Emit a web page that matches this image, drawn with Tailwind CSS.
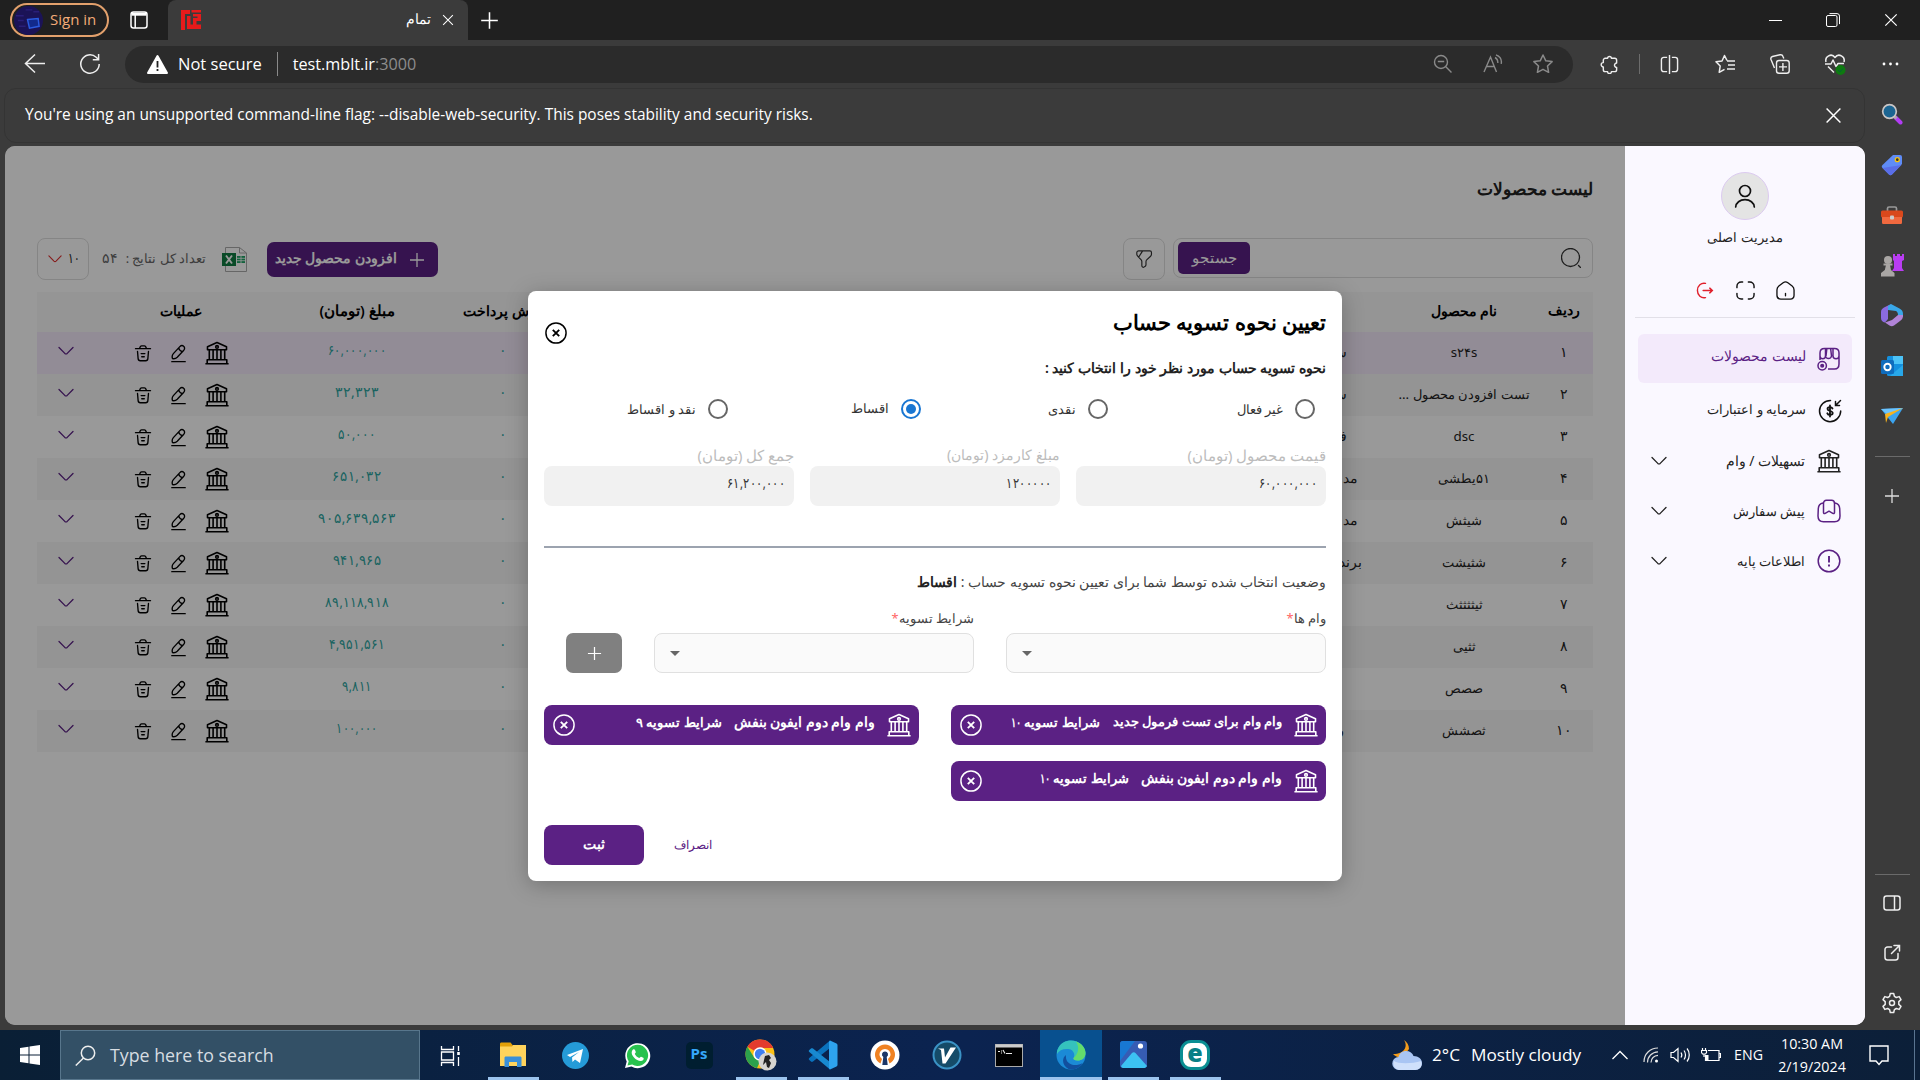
<!DOCTYPE html>
<html lang="fa">
<head>
<meta charset="utf-8">
<title>تمام</title>
<script src="https://cdn.jsdelivr.net/npm/@tailwindcss/browser@4"></script>
</head>
<body class="w-[1920px] h-[1080px] overflow-hidden bg-[#3b3b3b] text-white font-['Open_Sans',sans-serif]">
<svg class="hidden">
  <symbol id="bank" viewBox="0 0 24 24" fill="none" stroke="currentColor" stroke-width="1.600" stroke-linejoin="round">
    <path d="M2.500 8.800V5.800L12 1.500l9.500 4.300v3zM4.300 9v9.500M8.100 9v9.500M12 9v9.500M15.900 9v9.500M19.700 9v9.500M2.200 22.500v-3.700h19.600v3.700M.4 22.700h23.200"/><circle cx="12" cy="5.900" r="1.300"/>
  </symbol>
  <symbol id="pencil" viewBox="0 0 24 24" fill="none" stroke="currentColor" stroke-width="1.700" stroke-linejoin="round" stroke-linecap="round">
    <path d="M4.500 18.500c-1-2.500-.5-4.600 1-6.300L13.700 3.300c1.500-1.500 3.400-1.700 4.800-.4 1.500 1.300 1.600 3.300.2 4.900L10.400 16.800c-1.500 1.500-3.500 2.200-5.900 1.700zM12.200 5c.6 2.500 2.200 4.200 4.800 4.600M3.500 22.300h17"/>
  </symbol>
  <symbol id="trash" viewBox="0 0 24 24" fill="none" stroke="currentColor" stroke-width="1.800" stroke-linecap="round" stroke-linejoin="round">
    <path d="M2 6.200h20M7.500 6c.6-2.600 1-3.600 2.600-3.600h3.800c1.600 0 2 1 2.600 3.600M4.700 10l.8 9.500c.2 2 .8 2.800 2.800 2.800h7.400c2 0 2.600-.8 2.800-2.800l.8-9.500M9.500 12.800h5M10.300 17h3.400"/>
  </symbol>
  <symbol id="down" viewBox="0 0 16 16" fill="none" stroke="currentColor" stroke-width="1.300" stroke-linecap="round" stroke-linejoin="round"><path d="M1 4.500l5.800 5.900c.8.700 1.600.7 2.400 0L15 4.500"/></symbol>
  <symbol id="plus" viewBox="0 0 16 16" fill="none" stroke="currentColor" stroke-width="1.300"><path d="M8 1v14M1 8h14"/></symbol>
  <symbol id="x" viewBox="0 0 16 16" fill="none" stroke="currentColor" stroke-width="1.400"><path d="M1.500 1.500l13 13M14.500 1.500l-13 13"/></symbol>
  <symbol id="cx" viewBox="0 0 24 24" fill="none" stroke="currentColor" stroke-width="1.600"><circle cx="12" cy="12" r="11"/><path stroke-width="2" d="M8.500 8.500l7 7M15.500 8.500l-7 7"/></symbol>
</svg>

<!-- Tab strip -->
<header class="flex h-10 items-center bg-[#202020]">
  <div class="ml-[10px] flex h-[34px] w-[99px] items-center gap-[7px] rounded-full border-2 border-[#e2a06c] pl-[2px] text-[15px] text-[#f3ab78]">
    <svg class="size-[29px] shrink-0" viewBox="0 0 30 30"><circle cx="15" cy="15" r="15" fill="#1b1357"/><path d="M2 10h8M4 15h6M5 21h7M12 4h7M20 6h6" stroke="#2a1f78" stroke-width="1.500"/><path d="M14 14l11-1 1 8-10 2z" fill="#122a8c" stroke="#2b5be0" stroke-width="1.500"/></svg>
    <span class="whitespace-nowrap pb-0.5">Sign in</span>
  </div>
  <svg class="ml-[21px] size-[18px]" viewBox="0 0 18 18" fill="none" stroke="#fff" stroke-width="1.500"><rect x="1" y="1" width="16" height="16" rx="2.500"/><path stroke-width="3" d="M1.500 3.200h15"/><path d="M5.200 4v13"/></svg>
  <div class="ml-[20px] flex h-full w-[300px] items-center rounded-t-lg bg-[#3b3b3b] pl-[13px] pr-[14px]">
    <svg class="size-5" viewBox="0 0 20 20" fill="#e61b1b"><path d="M0 0h9v4H4v16H0zM10.500 0H20v2.500h-9.500zM6 6h3.500v8.500H12V8h4.500V6.500H12V4h8v7h-4.500v3.500H20V19H6z"/></svg>
    <span class="ml-auto pb-0.5 text-sm font-['Noto_Sans',sans-serif]">تمام</span>
    <svg class="ml-[11px] size-[12px]"><use href="#x"/></svg>
  </div>
  <svg class="ml-[12px] size-[19px]"><use href="#plus"/></svg>
  <div class="ml-auto mr-[22px] flex items-center gap-[44px]">
    <svg class="size-[14px]" viewBox="0 0 14 14" stroke="#fff"><path d="M1 7.500h13"/></svg>
    <svg class="size-[14px]" viewBox="0 0 14 14" fill="none" stroke="#fff"><rect x=".5" y="2.500" width="10.500" height="11" rx="1.500"/><path d="M3.500.6h7.500a2.500 2.500 0 0 1 2.500 2.500v8"/></svg>
    <svg class="size-[14px]"><use href="#x"/></svg>
  </div>
</header>

<!-- Toolbar -->
<nav class="flex h-12 items-center">
  <svg class="ml-[24px] size-[22px]" viewBox="0 0 22 22" fill="none" stroke="#eee" stroke-width="1.500"><path d="M21 10.500H1.500M11 1.500L1.500 10.500l9.500 9"/></svg>
  <svg class="ml-[33px] size-[22px]" viewBox="0 0 22 22" fill="none" stroke="#eee" stroke-width="1.500"><path d="M20.200 11a9.200 9.200 0 1 1-3-6.800l2.300 2.300M19.600 1v5.800h-5.800"/></svg>
  <div class="ml-[24px] flex h-[37px] w-[1448px] items-center rounded-full bg-[#2b2b2b] pl-[22px] pr-[20px]">
    <svg class="size-[21px]" viewBox="0 0 21 21"><path fill="#fff" stroke="#fff" stroke-width="2" stroke-linejoin="round" d="M10.500 2L20 19H1z"/><path stroke="#222" stroke-width="1.800" d="M10.500 7v6.500M10.500 15v2"/></svg>
    <span class="ml-[10px] whitespace-nowrap text-[16.500px]">Not secure</span>
    <span class="mx-[15px] h-6 w-px bg-[#8a8a8a]"></span>
    <span class="whitespace-nowrap text-[16.200px]">test.mblt.ir<span class="text-[#8d8d8d]">:3000</span></span>
    <div class="ml-auto flex items-center gap-[30px] text-[#8a8a8a]">
      <svg class="size-5" viewBox="0 0 20 20" fill="none" stroke="currentColor" stroke-width="1.400"><circle cx="8" cy="8" r="6.500"/><path d="M4.800 7.500h6.400M12.800 12.800L18.500 18.500"/></svg>
      <svg class="size-5" viewBox="0 0 20 20" fill="none" stroke="currentColor" stroke-width="1.400"><path d="M1 18L7.500 3 13.500 18M3.500 12.500h8M12 3.500c2 1 3 3 2.800 5.500M13 .8c4 1.600 6 5 5.200 9"/></svg>
      <svg class="size-5" viewBox="0 0 20 20" fill="none" stroke="currentColor" stroke-width="1.500" stroke-linejoin="round"><path d="M10 1l2.800 5.800 6.300.8-4.600 4.400 1.100 6.300L10 15.300l-5.600 3 1.100-6.300L.9 7.600l6.300-.8z"/></svg>
    </div>
  </div>
  <div class="ml-[27px] flex items-center">
    <svg class="size-[19px]" viewBox="0 0 20 20" fill="none" stroke="#eee" stroke-width="1.500" stroke-linejoin="round"><path d="M8 3.500a2 2 0 0 1 4 0h3.500a2 2 0 0 1 2 2v3a2.200 2.200 0 1 0 0 4.500v2.500a2 2 0 0 1-2 2H12a2 2 0 0 1-4 0H5.500a2 2 0 0 1-2-2v-3a2.200 2.200 0 0 1 0-4.500V5.500a2 2 0 0 1 2-2z"/></svg>
    <span class="ml-[20px] h-5 w-px bg-[#6c6c6c]"></span>
    <svg class="ml-[20px] size-[19px]" viewBox="0 0 20 20" fill="none" stroke="#eee" stroke-width="1.500"><path d="M7.500 2.500H4A2.500 2.500 0 0 0 1.500 5v10A2.500 2.500 0 0 0 4 17.500h3.500M12.500 2.500H16A2.500 2.500 0 0 1 18.500 5v10a2.500 2.500 0 0 1-2.500 2.500h-3.500M10 0v20"/></svg>
    <svg class="ml-[36px] size-5" viewBox="0 0 20 20" fill="none" stroke="#eee" stroke-width="1.500" stroke-linejoin="round"><path d="M12 6.500L9.500 1.500 7 7l-6 .8L5.200 12l-1 6.300L9.500 15.300M12 7h8M13 11h7M12 15h8"/></svg>
    <svg class="ml-[35px] size-5" viewBox="0 0 20 20" fill="none" stroke="#eee" stroke-width="1.400"><path d="M4.500 14L1 5.500C.5 4 1 3 2.500 2.500L10 .8c1.500-.3 2.500.2 3 1.700l.8 2"/><rect x="6.500" y="6.500" width="12.700" height="12.700" rx="2.500"/><path d="M12.900 9v8M9 12.900h8"/></svg>
    <svg class="ml-[34px] size-[22px]" viewBox="0 0 22 22" fill="none" stroke="#eee" stroke-width="1.500" stroke-linejoin="round"><path d="M2 9C.5 3.500 7.500-.5 11 4.500 14.500-.5 21.500 3.500 20 9M1 11h6l2-4 3 6.500 2-3h6M4 13.500l6 6"/><circle cx="16.500" cy="17" r="5" fill="#0e7a10" stroke="none"/><path stroke="#063" stroke-width="1" d="M14 17l2 2 3-3.500"/></svg>
    <svg class="ml-[35px] size-[18px]" viewBox="0 0 18 18" fill="#fff"><circle cx="3" cy="9" r="1.400"/><circle cx="9.500" cy="9" r="1.400"/><circle cx="16" cy="9" r="1.400"/></svg>
  </div>
</nav>

<div class="flex h-[942px]">
  <div class="flex w-[1865px] flex-col pl-[4px]">
    <!-- Info bar -->
    <div class="flex h-[55px] shrink-0 items-center justify-between rounded-xl border border-[#343434] pl-[20px] pr-[22px]">
      <span class="whitespace-nowrap pb-px text-[15.450px]">You're using an unsupported command-line flag: --disable-web-security. This poses stability and security risks.</span>
      <svg class="size-[17px]"><use href="#x"/></svg>
    </div>

    <!-- Web page -->
    <div dir="rtl" class="relative ml-px mt-[3px] flex h-[879px] overflow-hidden rounded-[10px] bg-white font-['Noto_Sans',sans-serif] text-sm text-[#222]">
      <aside class="flex w-[240px] shrink-0 flex-col items-center bg-[#faf8ff]">
        <div class="mt-[26px] flex size-12 items-center justify-center rounded-full border border-[#dccbf0] bg-[#e4e4e4]">
          <svg class="size-6" viewBox="0 0 24 24" fill="none" stroke="#111" stroke-width="1.700" stroke-linecap="round"><circle cx="12" cy="7" r="5.500"/><path d="M2.700 23c.3-4.300 4.200-7.300 9.300-7.300s9 3 9.300 7.300"/></svg>
        </div>
        <div class="mt-[5px] leading-6 text-[13px]">مدیریت اصلی</div>
        <div class="mt-[32px] flex items-center gap-[21px]">
          <svg class="size-[19px]" viewBox="0 0 20 20" fill="none" stroke="#111" stroke-width="1.400" stroke-linecap="round"><path d="M7.500 1.800 3 5.300C1.500 6.500 1 7.500 1 9.500V15c0 2.600 1.500 4 4 4h10c2.500 0 4-1.500 4-4V9.500c0-2-.5-3-2-4.200l-4.500-3.500c-1.700-1.200-3.300-1.200-5 0zM10 13v2.500"/></svg>
          <svg class="size-[19px]" viewBox="0 0 20 20" fill="none" stroke="#111" stroke-width="1.500" stroke-linecap="round"><path d="M1 7V5.500C1 3 3 1 5.500 1H7M13 1h1.500C17 1 19 3 19 5.500V7M19 13v1.500c0 2.500-2 4.500-4.500 4.500H13M7 19H5.500C3 19 1 17 1 14.500V13"/></svg>
          <svg class="size-[19px]" viewBox="0 0 20 20" fill="none" stroke="#e0202c" stroke-width="1.500" stroke-linecap="round"><path d="M10 2.500C5.500 1.500 1.500 5 1.500 10s4 8.500 8.500 7.500M7.500 10h9.500M14.500 7.500 17.200 10l-2.700 2.500"/></svg>
        </div>
        <div class="mt-[17px] h-px w-[220px] bg-[#e2e0e8]"></div>
        <div class="mt-[16px] flex h-[49px] w-[214px] items-center rounded-md bg-[#f3eafb] pr-[11px] text-[13.500px] text-[#5b2184]">
          <svg class="size-6" viewBox="0 0 24 24" fill="none" stroke="currentColor" stroke-width="1.500"><path d="M3 13V6c0-3 1.500-4.500 4.500-4.500h10C20.500 1.500 22 3 22 6v11c0 3-1.500 5-4.500 5H11M8.500 2v7c0 3.500-5.500 3.500-5.500 0M8.500 9c.5 3.300 5.500 3.300 6 0M9 9l.8-7M14.500 9l-.8-7M16 2v7c0 3.500 6 3.500 6 0"/><circle cx="5.200" cy="18.800" r="4.200"/><circle cx="5.200" cy="18.800" r="1.300" fill="currentColor"/></svg>
          <span class="mr-[11px] -mt-[3px]">لیست محصولات</span>
        </div>
        <div class="mt-[3px] flex h-[50px] w-[214px] items-center pr-[10px] text-[12.900px]">
          <svg class="size-6" viewBox="0 0 24 24" fill="none" stroke="#111" stroke-width="1.500" stroke-linecap="round"><path d="M12.500 1.500C6.500 1.500 1.500 6.200 1.500 12s5 10.700 10.500 10.700S22.700 18 22.700 12M22.500 1.500L18 6M17.500 2.500v4H21.500"/><path d="M14.500 9.500c-.8-1.700-5-2-5 .5s5.200 1.500 5.200 4-4.500 2.500-5.400.3M12 6.500v11" stroke-width="1.800"/></svg>
          <span class="mr-[12px] -mt-1">سرمایه و اعتبارات</span>
        </div>
        <div class="flex h-[50px] w-[214px] items-center justify-between pl-[13px] pr-[11px] text-[14px]">
          <span class="flex items-center"><svg class="size-6"><use href="#bank"/></svg><span class="mr-[12px]">تسهیلات / وام</span></span>
          <svg class="size-4"><use href="#down"/></svg>
        </div>
        <div class="flex h-[50px] w-[214px] items-center justify-between pl-[13px] pr-[11px] text-[13px]">
          <span class="flex items-center"><svg class="size-6 text-[#5b2184]" viewBox="0 0 24 24" fill="none" stroke="currentColor" stroke-width="1.500" stroke-linejoin="round"><path d="M6 4C3 4.500 1.500 6.500 1.300 9.500L1 17c0 3.500 2 5.700 5.500 5.700h11c3.500 0 5.500-2.200 5.500-5.700l-.3-7.500C22.500 6.500 21 4.500 18 4"/><path d="M6.500 13.500V4.500c0-2 1-3.200 3-3.200h5c2 0 3 1.200 3 3.200v9c0 1-.8 1.300-1.700.8L12 12.200l-3.800 2.100c-.9.500-1.700.2-1.700-.8z"/></svg><span class="mr-[12px]">پیش سفارش</span></span>
          <svg class="size-4"><use href="#down"/></svg>
        </div>
        <div class="flex h-[50px] w-[214px] items-center justify-between pl-[13px] pr-[11px] text-[13.200px]">
          <span class="flex items-center"><svg class="size-6 text-[#5b2184]" viewBox="0 0 24 24" fill="none" stroke="currentColor" stroke-width="1.500"><circle cx="12" cy="12" r="10.800"/><path stroke-width="1.900" d="M12 7v6.500M12 15.500v2"/></svg><span class="mr-[12px]">اطلاعات پایه</span></span>
          <svg class="size-4"><use href="#down"/></svg>
        </div>
      </aside>

      <main class="flex w-[1620px] flex-col px-8">
        <h1 class="flex h-[92px] items-center pb-[6px] text-[17.300px] font-semibold">لیست محصولات</h1>
        <div class="flex h-[42px] items-start">
          <div class="flex h-10 w-[420px] items-center justify-between rounded-lg border border-[#dedede] pl-[4px] pr-[11px]">
            <svg class="size-5" viewBox="0 0 20 20" fill="none" stroke="#333" stroke-width="1.300" stroke-linecap="round"><circle cx="9.500" cy="9.500" r="9"/><path d="M17.500 17.500l2 2"/></svg>
            <button class="h-8 w-[72px] rounded-[5px] bg-[#5b2184] pb-0.5 text-[14.500px] font-medium text-white">جستجو</button>
          </div>
          <div class="mr-2 flex size-[42px] items-center justify-center rounded-lg border border-[#dedede]">
            <svg class="size-[18px]" viewBox="0 0 18 20" fill="none" stroke="#333" stroke-width="1.300" stroke-linejoin="round"><path d="M3 1h12.500c1 0 1.800.8 1.800 1.800v2c0 .8-.5 1.700-1 2.200L12 11c-.5.500-.8 1.300-.8 2v3.500c0 .7-.4 1.400-1 1.700L9 19c-1 .6-2.400-.1-2.400-1.400v-4.700c0-.6-.3-1.400-.7-1.900L2.200 7C1.600 6.500 1 5.500 1 4.800V2.800C1 1.800 2 1 3 1zM7.500 1L3 8"/></svg>
          </div>
          <button class="mr-auto mt-[4px] flex h-[35px] w-[171px] items-center rounded-[7px] bg-[#5b2184] pr-[13px] text-white">
            <svg class="size-4"><use href="#plus"/></svg><span class="mr-[12px] whitespace-nowrap pb-[3px] font-semibold">افزودن محصول جدید</span>
          </button>
          <svg class="mr-[20px] mt-[9px] h-[25px] w-[25px]" viewBox="0 0 25 25"><path d="M3.500.5h14l7 5.500v18.500h-21zM17.500.5V6h7" fill="#fff" stroke="#aaa"/><path d="M15 9h8v7h-8z" fill="#21a366"/><path d="M15 11.300h8M15 13.700h8M19 9v7" stroke="#fff" stroke-width=".8"/><rect y="6" width="14" height="13" fill="#107c41"/><path d="M4 8.500l6 8M10 8.500l-6 8" stroke="#fff" stroke-width="1.900"/></svg>
          <div class="mr-[16px] flex h-[42px] w-[104px] items-center justify-between whitespace-nowrap pb-0.5 text-[12.700px] text-[#666]"><span>تعداد کل نتایج :</span><span class="text-[14px]">۵۴</span></div>
          <div class="mr-[13px] flex h-[42px] w-[52px] items-center justify-between rounded-lg border border-[#dedede] pl-[10px] pr-[8px] text-[14px]"><span class="origin-right scale-x-75 pb-0.5">۱۰</span><svg class="size-[14px] text-[#e03131]"><use href="#down"/></svg></div>
        </div>
        <div class="mt-3 grid h-10 grid-cols-[58px_142px_1fr_112px_180px_172px_58px] items-center bg-[#f9f9f9] pb-[3px] text-center font-semibold text-black">
          <span class="text-[13.500px]">ردیف</span><span>نام محصول</span><span></span><span>روش پرداخت</span><span class="text-[14.500px]">مبلغ (تومان)</span><span>عملیات</span><span></span>
        </div>
        <div id="rows"></div>
      </main>

      <div class="absolute bottom-0 left-0 top-0 w-[1620px] bg-black/40"></div>

      <!-- Settlement dialog -->
      <section class="absolute left-[523px] top-[145px] flex h-[590px] w-[814px] flex-col rounded-[8px] bg-white px-4 pt-4 shadow-[0_4px_22px_rgba(0,0,0,0.25)]">
        <div class="flex h-9 items-start justify-between">
          <h2 class="text-[20.800px] font-semibold leading-[31px] text-black">تعیین نحوه تسویه حساب</h2>
          <svg class="ml-px mt-[15px] size-[22px] text-black"><use href="#cx"/></svg>
        </div>
        <p class="h-[52px] text-[14.200px] font-semibold leading-[50px]">نحوه تسویه حساب مورد نظر خود را انتخاب کنید :</p>
        <div class="grid h-7 grid-cols-[207px_187px_193px_1fr] items-center pr-[11px] text-[13.200px] text-[#333]">
          <label class="flex items-center gap-3"><i class="size-5 rounded-full border-2 border-[#666]"></i>غیر فعال</label>
          <label class="flex items-center gap-3"><i class="size-5 rounded-full border-2 border-[#666]"></i>نقدی</label>
          <label class="flex items-center gap-3"><i class="flex size-5 items-center justify-center rounded-full border-2 border-[#1976d2]"><b class="size-[10px] rounded-full bg-[#1976d2]"></b></i><span class="text-[12.500px]">اقساط</span></label>
          <label class="flex items-center gap-3"><i class="size-5 rounded-full border-2 border-[#666]"></i>نقد و اقساط</label>
        </div>
        <div class="mt-[21px] grid grid-cols-3 gap-x-4 text-[#bcbcbc]">
          <label class="flex flex-col text-[14.700px] leading-[22px]">قیمت محصول (تومان)<span class="flex h-10 items-center rounded-lg bg-[#f1f1f1] pb-1.5 pr-[8px] text-sm text-[#333]"><span class="origin-right scale-x-82">۶۰,۰۰۰,۰۰۰</span></span></label>
          <label class="flex flex-col text-[14.300px] leading-[22px]">مبلغ کارمزد (تومان)<span class="flex h-10 items-center rounded-lg bg-[#f1f1f1] pb-1.5 pr-[8px] text-sm text-[#333]"><span class="origin-right scale-x-82">۱۲۰۰۰۰۰</span></span></label>
          <label class="flex flex-col text-[14.700px] leading-[22px]">جمع کل (تومان)<span class="flex h-10 items-center rounded-lg bg-[#f1f1f1] pb-1.5 pr-[8px] text-sm text-[#333]"><span class="origin-right scale-x-82">۶۱,۲۰۰,۰۰۰</span></span></label>
        </div>
        <hr class="mt-10 h-0.5 shrink-0 border-0 bg-[#9ca3af]">
        <p class="mt-[23px] h-[24px] leading-[22px] text-[#444]">وضعیت انتخاب شده توسط شما برای تعیین نحوه تسویه حساب : <b class="font-semibold text-[#222]">اقساط</b></p>
        <div class="mt-[10px] flex items-end text-[12.800px] text-[#444]">
          <div class="w-[320px]"><div class="h-7 leading-[26px]">وام ها<span class="text-[#f66]">*</span></div><div class="flex h-10 items-center justify-end rounded-lg border border-[#e0e0e0] bg-[#fafafa] pl-[15px]"><svg class="h-[5px] w-[10px]" viewBox="0 0 10 5"><path d="M0 0h10L5 5z" fill="#666"/></svg></div></div>
          <div class="mr-8 w-[320px]"><div class="h-7 leading-[26px]">شرایط تسویه<span class="text-[#f66]">*</span></div><div class="flex h-10 items-center justify-end rounded-lg border border-[#e0e0e0] bg-[#fafafa] pl-[15px]"><svg class="h-[5px] w-[10px]" viewBox="0 0 10 5"><path d="M0 0h10L5 5z" fill="#666"/></svg></div></div>
          <div class="mr-8 flex h-10 w-14 items-center justify-center rounded-[7px] bg-[#808080] text-white"><svg class="size-[15px]"><use href="#plus"/></svg></div>
        </div>
        <div class="mt-8 grid grid-cols-[375px_375px] gap-x-8 gap-y-4 whitespace-pre font-semibold text-white">
          <div class="flex h-10 items-center rounded-lg bg-[#5b2184] pl-[9px] pr-[8px]"><svg class="size-6"><use href="#bank"/></svg><span class="mb-1.5 mr-[12px] text-[13.400px]">وام وام برای تست فرمول جدید</span><span class="mb-1.5 mr-[13px] text-[13.100px]">شرایط تسویه <span class="inline-block origin-right scale-x-75">۱۰</span></span><svg class="mr-auto size-[22px]"><use href="#cx"/></svg></div>
          <div class="flex h-10 items-center rounded-lg bg-[#5b2184] pl-[9px] pr-[8px]"><svg class="size-6"><use href="#bank"/></svg><span class="mb-1.5 mr-[12px] text-[13.900px]">وام وام دوم ایفون بنفش</span><span class="mb-1.5 mr-[12px] text-[13.100px]">شرایط تسویه ۹</span><svg class="mr-auto size-[22px]"><use href="#cx"/></svg></div>
          <div class="flex h-10 items-center rounded-lg bg-[#5b2184] pl-[9px] pr-[8px]"><svg class="size-6"><use href="#bank"/></svg><span class="mb-1.5 mr-[12px] text-[13.900px]">وام وام دوم ایفون بنفش</span><span class="mb-1.5 mr-[12px] text-[13.100px]">شرایط تسویه <span class="inline-block origin-right scale-x-75">۱۰</span></span><svg class="mr-auto size-[22px]"><use href="#cx"/></svg></div>
        </div>
        <div class="mt-6 flex items-center justify-end">
          <button class="text-[12px] text-[#5b2184]">انصراف</button>
          <button class="mr-[30px] h-10 w-[100px] rounded-lg bg-[#5b2184] pb-0.5 font-semibold text-white">ثبت</button>
        </div>
      </section>
    </div>
  </div>

  <!-- Browser side bar -->
  <div class="flex w-[54px] flex-col items-center pt-[15px]">
    <svg class="size-[22px]" viewBox="0 0 22 22"><path d="M14 14l5.500 5.500" stroke="#b23cf5" stroke-width="4" stroke-linecap="round"/><path d="M13 13l2.500 2.500" stroke="#aaa" stroke-width="3"/><circle cx="8.500" cy="8.500" r="6.800" fill="#1c6592" stroke="#c9c5c5" stroke-width="1.700"/></svg>
    <svg class="mt-[29px] size-[22px]" viewBox="0 0 22 22"><path d="M12 1h7a2 2 0 0 1 2 2v7L11 20.500c-1 1-2 1-3 0L1.500 14c-1-1-1-2 0-3z" fill="#5f8cf7"/><path d="M20.500 11L11 20.500c-1 1-2 1-3 0L1.500 14z" fill="#5a6ee8"/><circle cx="16.300" cy="5.700" r="2" fill="#333" stroke="#f5c211" stroke-width="1.300"/></svg>
    <svg class="mt-[29px] h-[22px] w-6" viewBox="0 0 24 22"><path d="M7.500 6V3.500c0-1 .5-1.500 1.500-1.500h6c1 0 1.500.5 1.500 1.500V6" fill="none" stroke="#999" stroke-width="1.700"/><rect x="1" y="5.500" width="22" height="7" rx="1.500" fill="#d9481c"/><path d="M2 12h20v5.500c0 1-.7 1.500-1.500 1.500h-17C2.700 19 2 18.500 2 17.500z" fill="#f0693f"/><rect x="10" y="10.500" width="4" height="4" rx="1" fill="#ccc"/></svg>
    <svg class="mt-[26px] size-6" viewBox="0 0 24 24"><path d="M13 1h2v2h2V1h3v2h2V1h2v6l-2 1v7l2 3H12l2-3V8l-1-1z" fill="#b93df2"/><g fill="#a9a6a4"><circle cx="8" cy="7" r="4"/><path d="M3.500 10.500h9v2h-9zM6 12h4l1 5 3.500 3v3.500H1V20l3.800-3z"/></g></svg>
    <svg class="mt-[26px] size-6" viewBox="0 0 24 24"><path d="M11 1L4 4.500C2 5.700 1 7 1 9v6c0 2.500 1.500 4 4 4.500L8 16V7z" fill="#8b6be0"/><path d="M11 1l8.500 4.500C21.500 6.700 23 8 23 11v3l-5-2c0-2-.5-3-2-4L8 7V3z" fill="#39a7e8"/><path d="M23 12c0 3-.5 4.500-3 6l-6 4.500c-1.500 1-3 1-4.500 0L5 19.500l7-2.500 6-5z" fill="#b184d8"/></svg>
    <svg class="mt-[27px] size-6" viewBox="0 0 24 24"><rect x="7" y="2" width="16" height="20" rx="1.500" fill="#1490df"/><path d="M13 2h10v8H13z" fill="#4cc3f7"/><path d="M23 11v11H10z" fill="#28a8ea"/><rect x="1" y="6" width="13" height="14" rx="1.500" fill="#0f6cbd"/><circle cx="7.500" cy="13" r="3.200" fill="none" stroke="#fff" stroke-width="1.900"/></svg>
    <svg class="mt-[26px] size-6" viewBox="0 0 24 24"><path d="M1 5l22-1-10 16z" fill="#3ba4f0"/><path d="M1 5l22-1L8 11z" fill="#6cc4ff"/><path d="M5 10L23 4 8 13l-2 6z" fill="#f7b31e"/></svg>
    <div class="mt-[28px] h-px w-[35px] shrink-0 bg-[#6a6a6a]"></div>
    <svg class="mt-[31px] size-4 text-[#ddd]"><use href="#plus"/></svg>
    <div class="mt-auto h-px w-[35px] shrink-0 bg-[#6a6a6a]"></div>
    <svg class="mt-[19px] size-[18px]" viewBox="0 0 18 18" fill="none" stroke="#eee" stroke-width="1.500"><rect x="1" y="2" width="16" height="14" rx="2.500"/><path d="M11.500 2v14"/></svg>
    <svg class="mt-[32px] size-[18px]" viewBox="0 0 18 18" fill="none" stroke="#eee" stroke-width="1.500" stroke-linecap="round"><path d="M8.500 3H4.500A2.500 2.500 0 0 0 2 5.500v8A2.500 2.500 0 0 0 4.500 16h8a2.500 2.500 0 0 0 2.500-2.500v-4M11 1.500h5.500V7M16 2L8.500 9.500"/></svg>
    <svg class="mb-[16px] mt-[30px] size-[22px]" viewBox="0 0 22 22" fill="none" stroke="#eee" stroke-width="1.500" stroke-linejoin="round"><path d="M9.300 1.500h3.400l.7 2.900 1.900 1.100 2.900-.9 1.800 3-2.200 2v2.800l2.200 2-1.800 3-2.900-.9-1.900 1.100-.7 2.900H9.300l-.7-2.900-1.900-1.100-2.900.9-1.800-3 2.200-2V9.600L2 7.600l1.800-3 2.900.9 1.900-1.100z"/><circle cx="11" cy="11" r="2.500"/></svg>
  </div>
</div>

<!-- Taskbar -->
<footer class="flex h-[50px] items-center bg-gradient-to-r from-[#0a1f35] via-[#0b2350] to-[#0c1f38]">
  <div class="flex w-[60px] justify-center"><svg class="size-5" viewBox="0 0 20 20" fill="#fff"><path d="M0 3l8.500-1.200v7.700H0zM9.500 1.600L20 0v9.500H9.500zM0 10.500h8.500v7.700L0 17zM9.500 10.500H20V20L9.500 18.400z"/></svg></div>
  <div class="flex h-[50px] w-[360px] items-center border border-[#58768c] bg-[#335066] pl-[14px]">
    <svg class="size-[21px]" viewBox="0 0 21 21" fill="none" stroke="#eee" stroke-width="1.500"><circle cx="13" cy="8" r="6.700"/><path d="M8.500 13L.8 20.500"/></svg>
    <span class="ml-[14px] text-[17.800px] text-[#d7dde2]">Type here to search</span>
  </div>
  <div class="flex h-[50px] w-[62px] items-center justify-center"><svg class="ml-[-2px] size-[21px]" viewBox="0 0 21 21" fill="none" stroke="#fff" stroke-width="1.300"><path d="M1.500 1v3.500h12V1M1.500 7h12v8h-12zM1.500 21v-3.500h12V21M18.500 1v5M18.500 12v9"/><rect x="17.200" y="7" width="2.600" height="3" fill="#fff" stroke="none"/></svg></div>
  <div id="apps" class="flex h-[50px]">
    <div class="flex w-[62px] items-center justify-center border-b-[3px] border-transparent bg-[linear-gradient(#9cc4ee,#9cc4ee)] bg-[length:51px_3px] bg-[position:center_bottom] bg-no-repeat bg-origin-border pt-0.5"><svg class="size-7" viewBox="0 0 28 28"><path d="M1 3c0-1 .5-1.500 1.500-1.500h9l2.500 3v3H1z" fill="#e3a008"/><path d="M1 5.500h12L14 4h13v21H1z" fill="#ffd35c"/><path d="M5.500 26V17c0-1 .5-1.500 1.500-1.500h14c1 0 1.500.5 1.500 1.500v9H18v-5h-8v5z" fill="#3a8fd8"/></svg></div>
    <div class="flex w-[62px] items-center justify-center"><svg class="size-[27px]" viewBox="0 0 27 27"><circle cx="13.500" cy="13.500" r="13.500" fill="#259bd8"/><path d="M5 13L21 7l-3 14-5-3.500-2.500 2.500-.5-4.500L17 10l-9 5z" fill="#fff"/></svg></div>
    <div class="flex w-[62px] items-center justify-center"><svg class="size-[27px]" viewBox="0 0 27 27"><path d="M1 26l1.700-6.500A12.500 12.500 0 1 1 7.500 24.500z" fill="#fff"/><path d="M3.500 23.500l1.200-4.300A10.600 10.600 0 1 1 8.200 22.500z" fill="#28c24e"/><path d="M9 7.500c1-.7 1.700-.3 2 .5l.8 2c.2.700-1 1.500-1 2 1 2 2.400 3.200 4.400 4 .6 0 1.200-1.500 1.900-1.300l2.200 1.100c.6.400.5 1.500-.1 2.200-1.500 1.500-3.700 1.200-6 0-2.500-1.300-4.300-3.300-5.200-5.500-.6-2-.3-4 1-5z" fill="#fff"/></svg></div>
    <div class="flex w-[62px] items-center justify-center"><span class="flex size-[27px] items-center justify-center rounded-[5px] bg-[#001e30] pb-1 text-[15px] font-bold text-[#35a7fb]">Ps</span></div>
    <div class="flex w-[62px] items-center justify-center border-b-[3px] border-transparent bg-[linear-gradient(#9cc4ee,#9cc4ee)] bg-[length:51px_3px] bg-[position:center_bottom] bg-no-repeat bg-origin-border pt-0.5"><svg class="size-8" viewBox="0 0 32 32"><circle cx="15" cy="15" r="14.500" fill="#fbc116"/><path d="M15 15L2.400 7.800A14.500 14.500 0 0 1 27.600 7.800L28 9H15z" fill="#e33b2e"/><path d="M2.400 7.800L9.500 19l5.500 3-3 7.200A14.500 14.500 0 0 1 2.400 7.800z" fill="#2ba24c"/><circle cx="15" cy="15" r="6.700" fill="#fff"/><circle cx="15" cy="15" r="5.200" fill="#3f7ff0"/><circle cx="22.500" cy="22.500" r="9" fill="#d6d4d0"/><path d="M20 17l4-1 2 3-2 2 2 3-2 5-2-1-1-5-3 3 1-5z" fill="#222"/></svg></div>
    <div class="flex w-[62px] items-center justify-center border-b-[3px] border-transparent bg-[linear-gradient(#9cc4ee,#9cc4ee)] bg-[length:51px_3px] bg-[position:center_bottom] bg-no-repeat bg-origin-border pt-0.5"><svg class="size-[30px]" viewBox="0 0 30 30"><path d="M22 .5V8L5 21.500c-.7.500-1.500.5-2 0l-1.700-1.500c-.7-.6-.7-1.500 0-2.100z" fill="#0a72bd"/><path d="M22 29.500V22L5 8.500c-.7-.5-1.500-.5-2 0L1.300 10c-.7.600-.7 1.500 0 2.100z" fill="#1889d0"/><path d="M22 .5l6.500 3c.6.3 1 .9 1 1.500v20c0 .6-.4 1.200-1 1.500l-6.500 3c-.5-.3-1-1-1-1.500V2c0-.6.400-1.200 1-1.500z" fill="#2ea3ef"/></svg></div>
    <div class="flex w-[62px] items-center justify-center"><svg class="size-[30px]" viewBox="0 0 30 30"><circle cx="15" cy="15" r="14.500" fill="#fff"/><path d="M10.500 23.500a10 10 0 1 1 9 0L18 19a5.500 5.500 0 1 0-6 0z" fill="#f08222"/><path d="M15 11.500a3 3 0 0 1 1.700 5.500l1 8h-5.400l1-8A3 3 0 0 1 15 11.500z" fill="#1c3768"/></svg></div>
    <div class="flex w-[62px] items-center justify-center"><svg class="size-[30px]" viewBox="0 0 30 30"><circle cx="15" cy="15" r="13.500" fill="#154b68" stroke="#3b93c6" stroke-width="2"/><path d="M6 8.500h6l1 9 5.500-10H24L13.500 23.500h-3L9 10z" fill="#fff"/></svg></div>
    <div class="flex w-[62px] items-center justify-center"><svg class="h-[23px] w-7" viewBox="0 0 28 23"><rect x=".5" y=".5" width="27" height="22" fill="#000" stroke="#aaa"/><path d="M.5 2h27" stroke="#ccc" stroke-width="3"/><path d="M3 7.500h2M6.500 6.500v1M6.500 8.500v1M8 6l2 3.500M11 9.500h6" stroke="#eee" stroke-width="1.100"/></svg></div>
    <div class="flex w-[62px] items-center justify-center border-b-[3px] border-[#9cc4ee] bg-[#08508f] pt-0.5"><svg class="size-[30px]" viewBox="0 0 30 30"><circle cx="15" cy="15" r="14.500" fill="#1b8ad6"/><path d="M1 11C4 2 10 .5 15 .5c8 0 14.500 6 14.500 12.500 0 5-3.500 7.500-8 7.500-3 0-4.500-1-4-2.500 1.500-1.500 1.500-8-5-9C7 8.500 3 10.500 1 14z" fill="#35c2bd"/><path d="M20 1.500c6 2 9.500 7 9.500 11.500 0 5-3.500 7.500-8 7.500-3 0-4.500-1-4-2.500C22 14 24 8 20 1.500z" fill="#63dc6c"/><path d="M10 15c-1 8 6 11.500 13 9.500 1.500-.5 3-1 3.500-1-3 4.500-8.500 7-14 5.500C6 26 5.500 18 10 15z" fill="#124f9e"/></svg></div>
    <div class="flex w-[62px] items-center justify-center border-b-[3px] border-transparent bg-[linear-gradient(#9cc4ee,#9cc4ee)] bg-[length:51px_3px] bg-[position:center_bottom] bg-no-repeat bg-origin-border pt-0.5"><svg class="size-[27px]" viewBox="0 0 27 27"><rect width="27" height="27" rx="3" fill="#365cb4"/><path d="M0 3c0-2 1-3 3-3h12L0 20z" fill="#1878d2"/><path d="M1 25L12 12c1-1 2.500-1 3.500 0L27 25c-1 1.500-2 2-3.500 2h-20C2.500 27 1.500 26.500 1 25z" fill="#3cc2f2"/><circle cx="20.500" cy="5" r="2.600" fill="#fff"/></svg></div>
    <div class="flex w-[62px] items-center justify-center border-b-[3px] border-transparent bg-[linear-gradient(#9cc4ee,#9cc4ee)] bg-[length:51px_3px] bg-[position:center_bottom] bg-no-repeat bg-origin-border pt-0.5"><span class="flex size-[30px] items-center justify-center rounded-[11px] border-[3px] border-[#0a8e93] bg-white pb-[5px] text-[25px] font-extrabold leading-none text-[#087f86]">e</span></div>
  </div>
  <div class="ml-auto flex items-center whitespace-nowrap">
    <svg class="h-8 w-[31px]" viewBox="0 0 31 32"><path d="M12 1c4 6 1 14-11 14 3 3 6 4 10 3l6-8c0-4-2-7-5-9z" fill="#f39c1c"/><path d="M7 31a6.500 6.500 0 0 1-.5-13c1-4 4-6 7.500-6 4 0 6.500 2 7.500 5 5 0 8.500 3 8.500 7s-3 7-7 7z" fill="#a9c5f3"/><path d="M7 31a6.500 6.500 0 0 1-5-9c4 3 18 3 27 0 2 5-1 9-6 9z" fill="#cfe0fb"/></svg>
    <span class="ml-[9px] text-[17.200px]">2°C</span><span class="ml-[11px] text-[17.200px]">Mostly cloudy</span>
    <svg class="ml-[31px] size-4" viewBox="0 0 16 16" fill="none" stroke="#fff" stroke-width="1.300"><path d="M.5 12L8 4.500 15.500 12"/></svg>
    <svg class="ml-[15px] size-4" viewBox="0 0 16 16" fill="none" stroke="#ddd" stroke-width="1.200"><path d="M1 15C1 7 7 1 15 1M4.500 15.500C4.500 9.500 9 5 15 4.800M8 15.500c0-4 3-7 7-7.200"/><circle cx="13.500" cy="14" r="1.500" fill="#fff" stroke="none"/></svg>
    <svg class="ml-[11px] h-4 w-[21px]" viewBox="0 0 21 16" fill="none" stroke="#fff" stroke-width="1.200"><path d="M1 5.500h2.500L8 1.500v13l-4.500-4H1zM11 5.500c1 1.500 1 3.500 0 5M14 3.500c2 2.500 2 6.500 0 9M17 1.500c3 3.500 3 9.500 0 13"/></svg>
    <svg class="ml-[10px] h-4 w-5" viewBox="0 0 20 16" fill="none" stroke="#fff" stroke-width="1.200"><path d="M7 3.500h11v10H4.500V8M18 6.500h1.500v4H18M1.500 1v2.500M4.500 1v2.500M.5 3.500h5v2l-1 1.500h-3L.5 5.500zM3 7v3"/><path fill="#fff" stroke="none" d="M4.500 8h3v5h-3z"/></svg>
    <span class="ml-[13px] text-[14.200px]">ENG</span>
    <div class="ml-[15px] w-[68px] text-center text-[14.300px] leading-[23px]"><div>10:30 AM</div><div>2/19/2024</div></div>
    <svg class="ml-[23px] h-[21px] w-5" viewBox="0 0 20 21" fill="none" stroke="#fff" stroke-width="1.400"><path d="M1 1h18v15h-6l-3 3.500L7 16H1z"/></svg>
    <span class="ml-[25px] mr-[5px] h-[50px] w-px bg-[#5a7490]"></span>
  </div>
</footer>

<script>
// number, name, category, amount, category inset, amount width factor
const rows = [
  ['۱','s۲۴s','سا','۶۰,۰۰۰,۰۰۰',46,.82],
  ['۲','تست افزودن محصول ...','سا','۳۲,۳۲۳',46,1],
  ['۳','dsc','فا','۵۰,۰۰۰',46,.86],
  ['۴','۵۱یطشی','مد','۶۵۱,۰۳۲',35,.95],
  ['۵','شیثش','مد','۹۰۵,۶۳۹,۵۶۳',35,.97],
  ['۶','شثیشت','برند','۹۴۱,۹۶۵',31,.94],
  ['۷','ثیثثثثث','','۸۹,۱۱۸,۹۱۸',46,.89],
  ['۸','ثثیی','','۴,۹۵۱,۵۶۱',46,.88],
  ['۹','صصص','','۹,۸۱۱',46,.84],
  ['۱۰','ثصشش','ر','۱۰۰,۰۰۰',49,.81]
];
document.getElementById('rows').innerHTML = rows.map(([n, name, cat, amount, pad, k], i) => `
  <div class="grid h-[42px] grid-cols-[58px_142px_1fr_112px_180px_172px_58px] items-center text-center ${i === 0 ? 'bg-[#f3e9fa]' : i % 2 ? 'bg-[#f7f7f7]' : 'bg-white'}">
    <span class="pb-0.5">${n}</span><span class="whitespace-nowrap pb-0.5 text-[13.300px]">${name}</span>
    <span class="text-right text-[13.500px]" style="padding-right:${pad}px">${cat}</span>
    <span class="pb-1.5 text-[#2ba5a0]">۰</span><span class="pb-1.5 text-[#2ba5a0]" style="transform:scaleX(${k})">${amount}</span>
    <span class="flex items-center justify-center gap-[17px] text-black"><svg class="size-6"><use href="#bank"/></svg><svg class="size-[19px]"><use href="#pencil"/></svg><svg class="size-[18px]"><use href="#trash"/></svg></span>
    <span class="flex justify-center pb-1 text-[#5b2184]"><svg class="size-4"><use href="#down"/></svg></span>
  </div>`).join('');
</script>
</body>
</html>
